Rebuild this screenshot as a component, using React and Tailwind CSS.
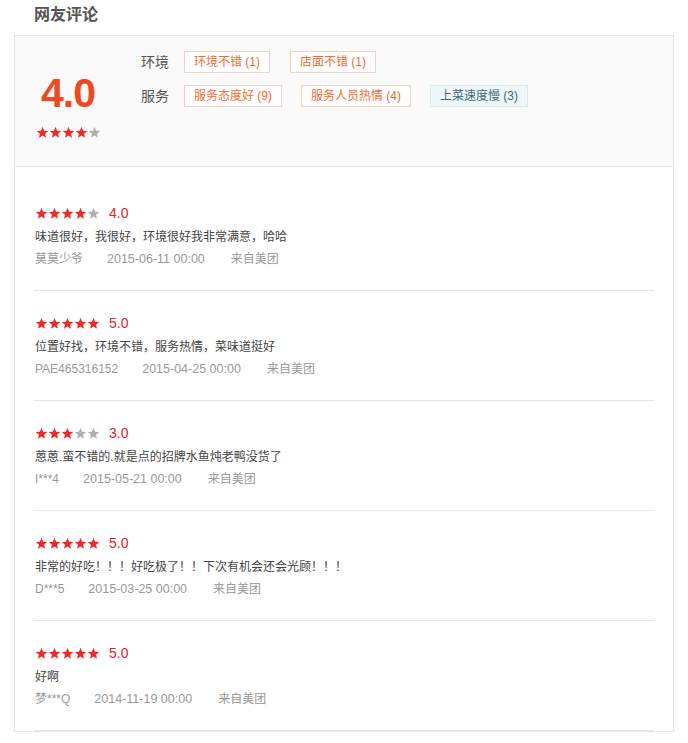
import React from "react";

const FONT = { fontFamily: '"Liberation Sans", "Noto Sans CJK SC", sans-serif' };

function Star({ on, size = 13 }) {
  return (
    <svg width={size} height={size} viewBox="0 0 24 24">
      <polygon
        points="12,1.5 14.9,8.6 22.6,9.2 16.7,14.2 18.5,21.8 12,17.7 5.5,21.8 7.3,14.2 1.4,9.2 9.1,8.6"
        fill={on ? "#ec2a2a" : "#b0b0b0"}
      />
    </svg>
  );
}

function Stars({ n }) {
  return (
    <div className="flex items-center">
      {[0, 1, 2, 3, 4].map((i) => (
        <Star key={i} on={i < n} />
      ))}
    </div>
  );
}

const reviews = [
  { n: 4, score: "4.0", text: "味道很好，我很好，环境很好我非常满意，哈哈", name: "莫莫少爷", date: "2015-06-11 00:00" },
  { n: 5, score: "5.0", text: "位置好找，环境不错，服务热情，菜味道挺好", name: "PAE465316152", date: "2015-04-25 00:00" },
  { n: 3, score: "3.0", text: "蒽蒽.蛮不错的.就是点的招牌水鱼炖老鸭没货了", name: "I***4", date: "2015-05-21 00:00" },
  { n: 5, score: "5.0", text: "非常的好吃！！！好吃极了！！下次有机会还会光顾！！！", name: "D***5", date: "2015-03-25 00:00" },
  { n: 5, score: "5.0", text: "好啊", name: "梦***Q", date: "2014-11-19 00:00" },
];

function Tag({ children, blue }) {
  return (
    <span
      className={
        "inline-flex h-[22px] items-center px-[9px] text-[12px] border " +
        (blue
          ? "bg-[#eef7fa] border-[#d6e9ef] text-[#3f6878]"
          : "bg-white border-[#f9d2bf] text-[#f06c36]")
      }
    >
      {children}
    </span>
  );
}

export default function App() {
  return (
    <div className="bg-white w-[688px] h-[743px] overflow-hidden" style={FONT}>
      <div className="h-[30px] leading-[30px] pl-[34px] text-[16px] font-bold text-[#555] mb-[5px]">网友评论</div>
      <div className="ml-[14px] w-[660px] border border-[#e5e5e5]">
        <div className="h-[131px] bg-[#fafafa] border-b border-[#e5e5e5] flex">
          <div className="w-[106px] flex flex-col items-center pt-[36px]">
            <div className="text-[41px] leading-[42px] font-bold text-[#ef4a1f] tracking-[-1px]">4.0</div>
            <div className="mt-[12px]">
              <Stars n={4} />
            </div>
          </div>
          <div className="ml-[20px] pt-[15px] flex flex-col gap-[12px]">
            <div className="flex items-center">
              <span className="text-[14px] text-[#555] w-[43px]">环境</span>
              <div className="flex gap-[20px]">
                <Tag>环境不错 (1)</Tag>
                <Tag>店面不错 (1)</Tag>
              </div>
            </div>
            <div className="flex items-center">
              <span className="text-[14px] text-[#555] w-[43px]">服务</span>
              <div className="flex gap-[19px]">
                <Tag>服务态度好 (9)</Tag>
                <Tag>服务人员热情 (4)</Tag>
                <Tag blue>上菜速度慢 (3)</Tag>
              </div>
            </div>
          </div>
        </div>
        <div className="pt-[14px] px-[19px]">
          {reviews.map((r, i) => (
            <div key={i} className="pt-[22px] pb-[23px] border-b border-[#e5e5e5] pl-px">
              <div className="h-[20px] flex items-center">
                <Stars n={r.n} />
                <span className="ml-[9px] text-[14px] text-[#e4212a]">{r.score}</span>
              </div>
              <div className="mt-[4px] leading-[20px] text-[12px] text-[#444]">{r.text}</div>
              <div className="mt-[4px] leading-[16px] text-[12px] text-[#999] flex">
                <span className="mr-[24px]">{r.name}</span>
                <span className="text-[12.5px] mr-[26px]">{r.date}</span>
                <span>来自美团</span>
              </div>
            </div>
          ))}
        </div>
      </div>
    </div>
  );
}
